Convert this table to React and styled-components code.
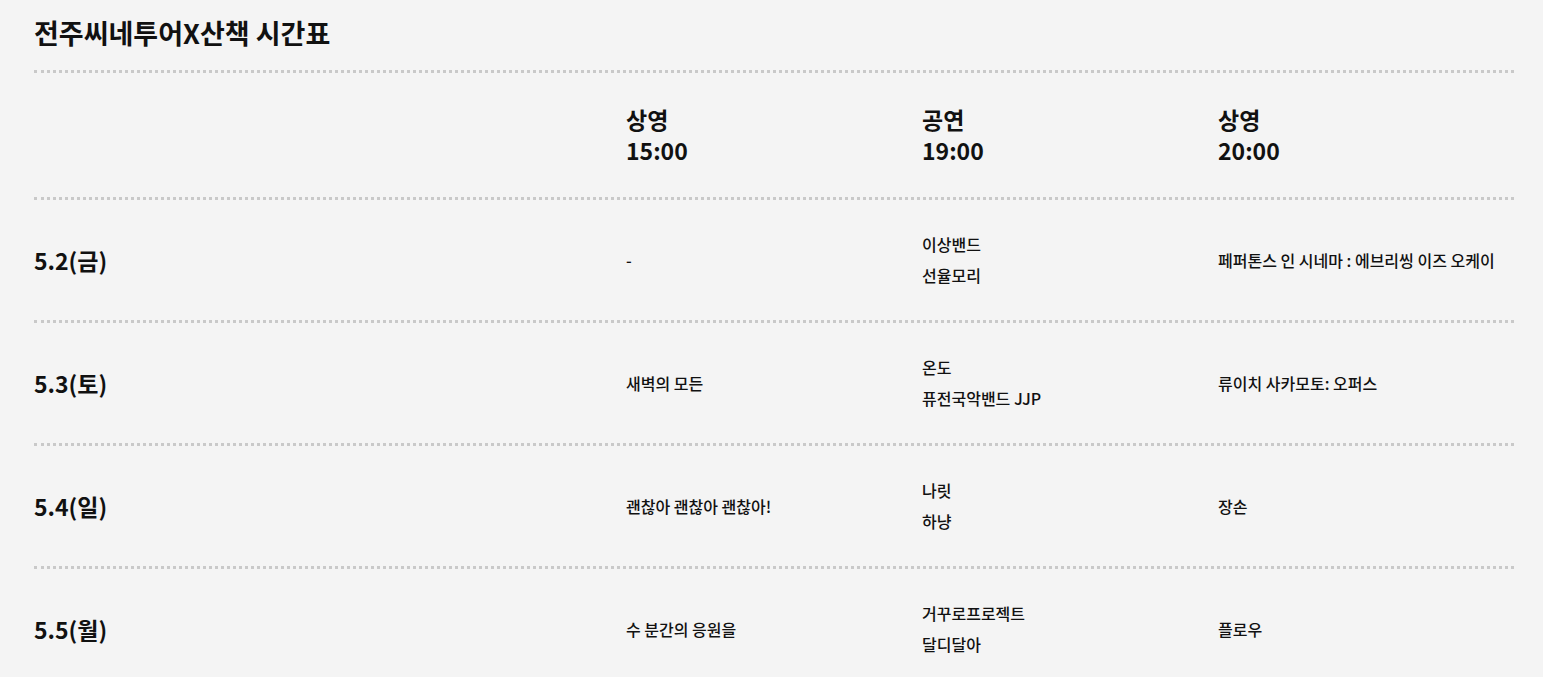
import React from 'react'
import styled, { createGlobalStyle } from 'styled-components'

const GlobalStyle = createGlobalStyle`
  html, body {
    margin: 0;
    padding: 0;
    background: #f4f4f4;
  }

  body {
    font-family: 'Noto Sans CJK KR', 'Noto Sans', sans-serif;
    color: #111;
  }
`

const Page = styled.div`
  padding: 0 29px 0 34px;
`

const Title = styled.h2`
  margin: 0;
  padding: 14px 0 18px;
  font-size: 27px;
  line-height: 38px;
  font-weight: 700;
`

const Row = styled.div`
  display: grid;
  grid-template-columns: 40% 20% 20% 20%;
  align-items: center;
  border-top: 3px dotted #c9c9c9;
  padding: ${({ head }) => (head ? '31px 0' : '29px 0')};
`

const HeadCell = styled.div`
  font-size: 23px;
  line-height: 31px;
  font-weight: 700;
`

const DateCell = styled.div`
  font-size: 23px;
  line-height: 31px;
  font-weight: 700;
`

const Cell = styled.div`
  font-size: 16px;
  line-height: 31px;
  font-weight: 500;
`

const heads = [
  ['상영', '15:00'],
  ['공연', '19:00'],
  ['상영', '20:00'],
]

const rows = [
  { date: '5.2(금)', a: ['-'], b: ['이상밴드', '선율모리'], c: ['페퍼톤스 인 시네마 : 에브리씽 이즈 오케이'] },
  { date: '5.3(토)', a: ['새벽의 모든'], b: ['온도', '퓨전국악밴드 JJP'], c: ['류이치 사카모토: 오퍼스'] },
  { date: '5.4(일)', a: ['괜찮아 괜찮아 괜찮아!'], b: ['나릿', '하냥'], c: ['장손'] },
  { date: '5.5(월)', a: ['수 분간의 응원을'], b: ['거꾸로프로젝트', '달디달아'], c: ['플로우'] },
]

const Lines = ({ items }) => (
  <Cell>
    {items.map(t => (
      <div key={t}>{t}</div>
    ))}
  </Cell>
)

const App = () => (
  <>
    <GlobalStyle />
    <Page>
      <Title>전주씨네투어X산책 시간표</Title>
      <Row head>
        <div />
        {heads.map(([kind, time], i) => (
          <HeadCell key={i}>
            <div>{kind}</div>
            <div>{time}</div>
          </HeadCell>
        ))}
      </Row>
      {rows.map(r => (
        <Row key={r.date}>
          <DateCell>{r.date}</DateCell>
          <Lines items={r.a} />
          <Lines items={r.b} />
          <Lines items={r.c} />
        </Row>
      ))}
    </Page>
  </>
)

export default App
